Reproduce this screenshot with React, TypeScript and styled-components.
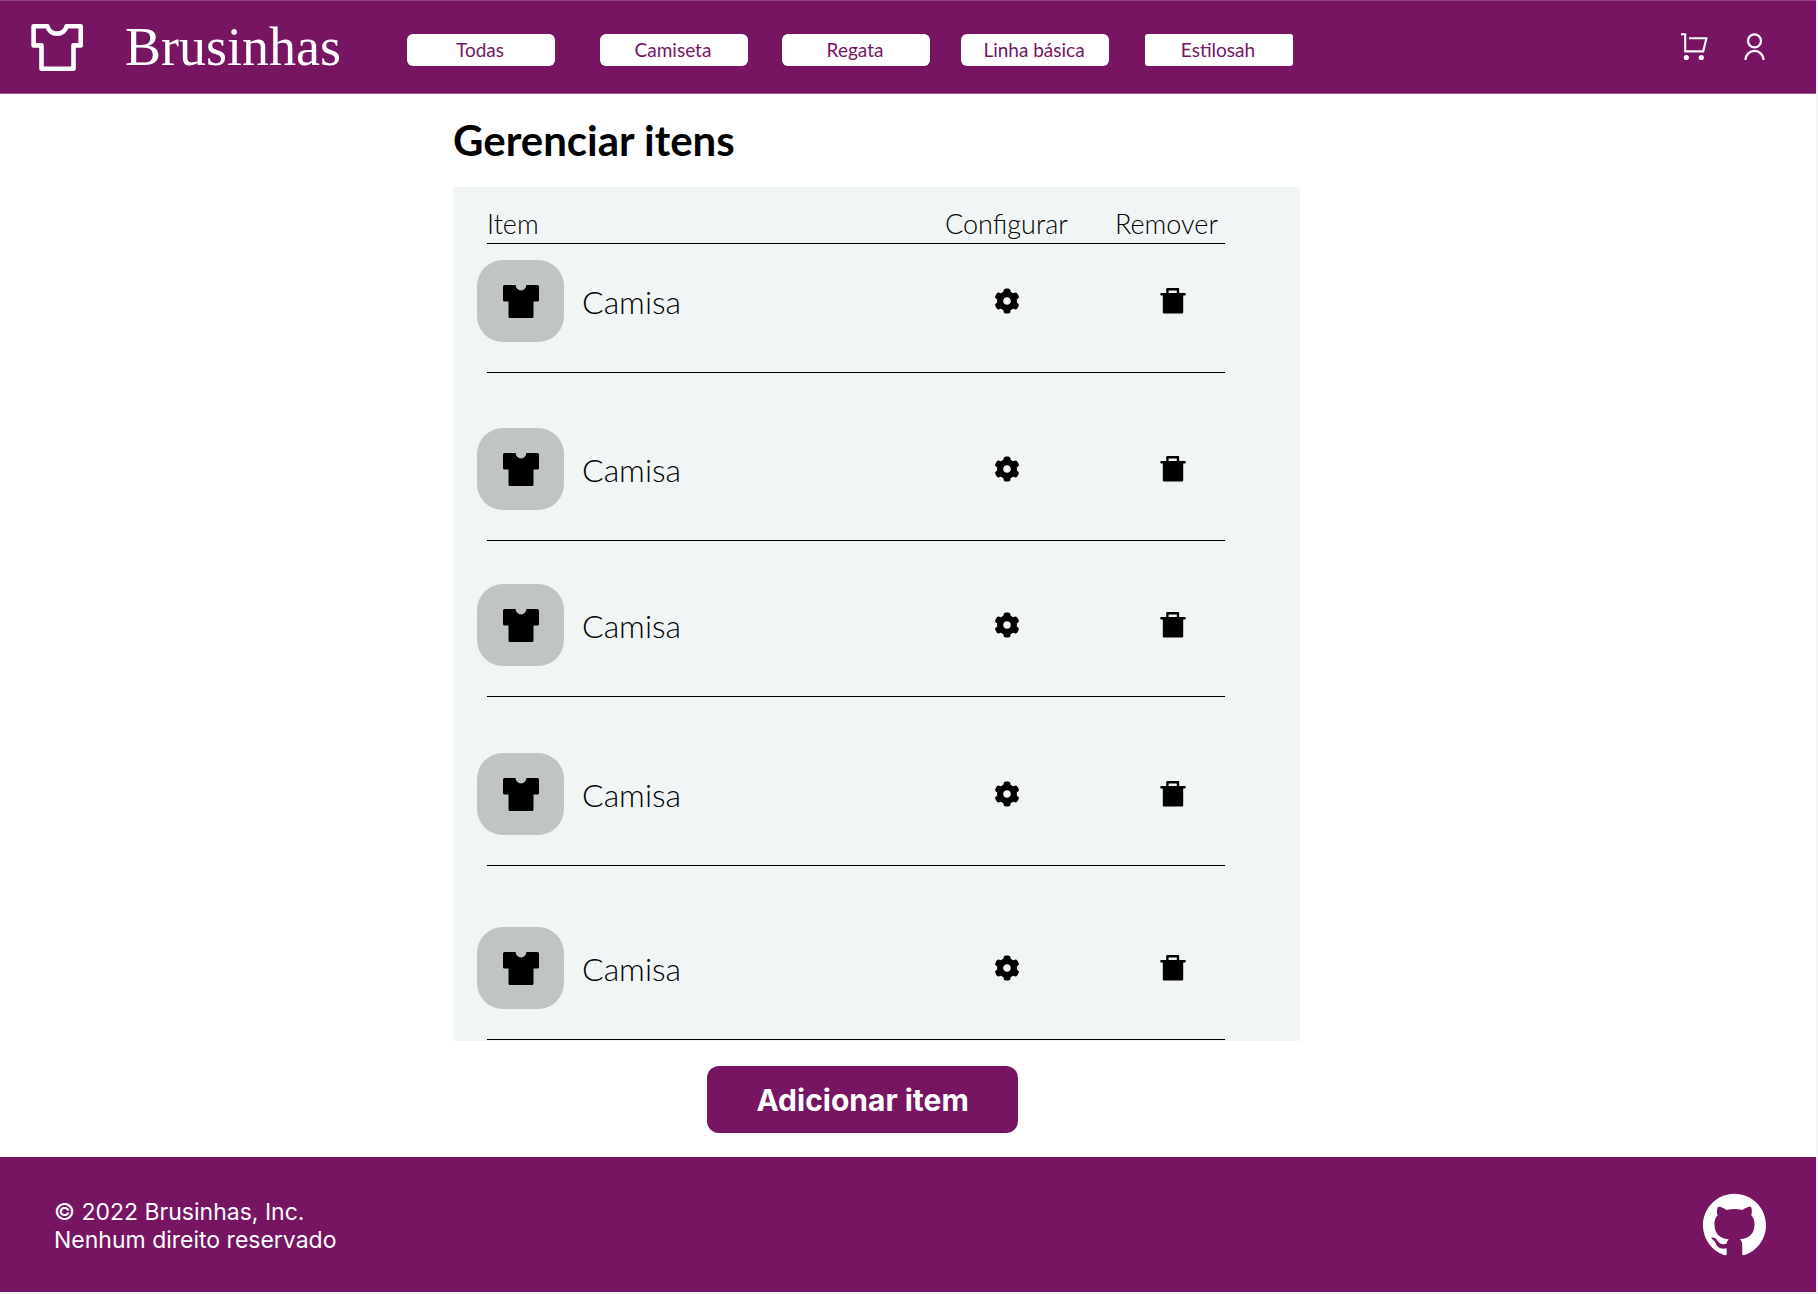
import React from "react";
import styled, { createGlobalStyle } from "styled-components";

const PURPLE = "#771562";

const GlobalStyle = createGlobalStyle`
  *, *::before, *::after { box-sizing: border-box; }
  body { margin: 0; background: #f5f5f5; }
  button { font: inherit; cursor: pointer; }
`;

const Page = styled.div`
  margin: 0 2px 2px 0;
  background: #fff;
  color: #000;
  font-family: Lato, "Open Sans", sans-serif;
`;

const Header = styled.header`
  display: grid;
  grid-template-columns: 94px 282px 1fr auto;
  align-items: center;
  height: 94px;
  padding: 0 51px 0 31px;
  background: ${PURPLE};
  border-top: 1px solid #8e4280;
  border-bottom: 1px solid #a25b95;
  color: #fff;
`;

const Brand = styled.a`
  color: inherit;
  text-decoration: none;
  font-family: "Liberation Serif", serif;
  font-size: 54px;
  line-height: 60px;
`;

const Nav = styled.nav`
  display: flex;
  padding-top: 5px;
`;

const NavButton = styled.button<{ $gap: number; $radius: number }>`
  flex: 0 1 148px;
  height: 32px;
  margin: 0 ${(p) => p.$gap}px 0 0;
  padding: 0 2px 0 0;
  border: 0;
  border-radius: ${(p) => p.$radius}px;
  background: #fff;
  color: ${PURPLE};
  font-size: 19px;
  line-height: 32px;
  white-space: nowrap;
`;

const Tools = styled.div`
  display: flex;
  gap: 36px;
`;

const IconButton = styled.button`
  display: flex;
  padding: 0;
  border: 0;
  background: none;
  color: inherit;
`;

const Main = styled.main`
  width: 847px;
  max-width: 75%;
  margin-left: calc(25% - 1px);
  padding: 22px 0 24px;
`;

const Title = styled.h1`
  margin: 0 0 23px;
  font-size: 42px;
  font-weight: 700;
  line-height: 48px;
`;

const Panel = styled.section`
  padding: 0 75px 1px 34px;
  background: #f1f5f6;
`;

const Table = styled.table`
  width: 100%;
  border-spacing: 0;
  table-layout: fixed;
  font-weight: 300;
`;

const HeadCell = styled.th<{ $width?: number }>`
  width: ${(p) => (p.$width ? `${p.$width}px` : "auto")};
  height: 57px;
  padding: 0 0 4px;
  border-bottom: 1px solid #000;
  font-size: 27px;
  font-weight: 300;
  line-height: 30px;
  text-align: left;
  vertical-align: bottom;
`;

const Cell = styled.td<{ $height: number }>`
  height: ${(p) => p.$height}px;
  padding: 0 0 30px;
  border-bottom: 1px solid #000;
  vertical-align: bottom;
`;

const Product = styled.div`
  display: flex;
  align-items: center;
  gap: 18px;
  margin-left: -10px;
  font-size: 32px;
`;

const Thumb = styled.span`
  display: flex;
  align-items: center;
  justify-content: center;
  width: 87px;
  height: 82px;
  border-radius: 26px;
  background: #c0c4c5;
`;

const Action = styled.div<{ $indent: number }>`
  display: flex;
  align-items: center;
  height: 82px;
  padding-left: ${(p) => p.$indent}px;
`;

const AddButton = styled.button`
  display: block;
  width: 311px;
  height: 67px;
  margin: 25px 0 0 30%;
  padding: 0;
  border: 0;
  border-radius: 12px;
  background: ${PURPLE};
  color: #fff;
  font-family: Inter, sans-serif;
  font-size: 30px;
  font-weight: 700;
`;

const Footer = styled.footer`
  display: flex;
  align-items: center;
  justify-content: space-between;
  height: 135px;
  padding: 0 50px 0 54px;
  background: ${PURPLE};
  color: #fff;
  font-family: Inter, sans-serif;
  font-size: 23px;
  line-height: 28px;
`;

const Legal = styled.p`
  margin: 0;
  padding-top: 2px;
`;

const FooterLink = styled.a`
  display: flex;
  color: inherit;
`;

const LogoIcon = () => (
  <svg width="52" height="47" viewBox="0 0 52 47" fill="none" stroke="currentColor" strokeWidth="4.6" strokeLinejoin="round" aria-hidden="true">
    <path d="M2.6 2.3H16.5A9.6 8.6 0 0 0 35.5 2.3H49.7V21.4H42.5V44.7H10.5V21.4H2.6Z" />
  </svg>
);

const CartIcon = () => (
  <svg width="27" height="28" viewBox="0 0 27 28" fill="none" stroke="currentColor" strokeWidth="2.1" aria-hidden="true">
    <path d="M0 1.3H4.2V18.4H22.2L25.4 5.2H8" />
    <circle cx="5.3" cy="24.5" r="2.6" fill="currentColor" stroke="none" />
    <circle cx="20.3" cy="24.5" r="2.6" fill="currentColor" stroke="none" />
  </svg>
);

const UserIcon = () => (
  <svg width="21" height="28" viewBox="0 0 21 28" fill="none" stroke="currentColor" strokeWidth="2.3" aria-hidden="true">
    <circle cx="10.5" cy="7.9" r="6.5" />
    <path d="M1.4 27A9.1 9.1 0 0 1 19.6 27" />
  </svg>
);

const ShirtIcon = () => (
  <svg width="36" height="33" viewBox="0 0 36 33" aria-hidden="true">
    <path d="M1.5 0H12.6A5.4 5.4 0 0 0 23.4 0H34.5Q36 0 36 1.5V15Q36 16.5 34.5 16.5H30.5V31.5Q30.5 33 29 33H7Q5.5 33 5.5 31.5V16.5H1.5Q0 16.5 0 15V1.5Q0 0 1.5 0Z" />
  </svg>
);

const GearIcon = () => (
  <svg width="26" height="26" viewBox="-13 -13 26 26" fill="none" stroke="currentColor" aria-hidden="true">
    <circle r="6.9" strokeWidth="6.2" />
    {[0, 60, 120, 180, 240, 300].map((angle) => (
      <path key={angle} d="M-1 -7V-10.1H1V-7Z" strokeWidth="5" strokeLinejoin="round" transform={`rotate(${angle})`} />
    ))}
  </svg>
);

const TrashIcon = () => (
  <svg width="26" height="26" viewBox="0 0 26 26" aria-hidden="true">
    <path d="M7.4 6V1.3H18V6" fill="none" stroke="currentColor" strokeWidth="2.4" strokeLinejoin="round" />
    <path d="M1 5H25Q25.7 5 25.7 6.2T25 7.4H23.2V24.5Q23.2 25.5 22.2 25.5H3.8Q2.8 25.5 2.8 24.5V7.4H1Q.3 7.4 .3 6.2T1 5Z" />
  </svg>
);

const GithubIcon = () => (
  <svg width="63" height="63" viewBox="0 0 24 24" fill="currentColor" aria-hidden="true">
    <path d="M12 .297c-6.63 0-12 5.373-12 12 0 5.303 3.438 9.8 8.205 11.385.6.113.82-.258.82-.577 0-.285-.01-1.04-.015-2.04-3.338.724-4.042-1.61-4.042-1.61C4.422 18.07 3.633 17.7 3.633 17.7c-1.087-.744.084-.729.084-.729 1.205.084 1.838 1.236 1.838 1.236 1.07 1.835 2.809 1.305 3.495.998.108-.776.417-1.305.76-1.605-2.665-.3-5.466-1.332-5.466-5.93 0-1.31.465-2.38 1.235-3.22-.135-.303-.54-1.523.105-3.176 0 0 1.005-.322 3.3 1.23.96-.267 1.98-.399 3-.405 1.02.006 2.04.138 3 .405 2.28-1.552 3.285-1.23 3.285-1.23.645 1.653.24 2.873.12 3.176.765.84 1.23 1.91 1.23 3.22 0 4.61-2.805 5.625-5.475 5.92.42.36.81 1.096.81 2.22 0 1.606-.015 2.896-.015 3.286 0 .315.21.69.825.57C20.565 22.092 24 17.592 24 12.297c0-6.627-5.373-12-12-12" />
  </svg>
);

const categories = [
  { label: "Todas", gap: 45, radius: 6 },
  { label: "Camiseta", gap: 34, radius: 6 },
  { label: "Regata", gap: 31, radius: 6 },
  { label: "Linha básica", gap: 36, radius: 6 },
  { label: "Estilosah", gap: 0, radius: 3 },
];

const items = [
  { id: 1, name: "Camisa", height: 129 },
  { id: 2, name: "Camisa", height: 168 },
  { id: 3, name: "Camisa", height: 156 },
  { id: 4, name: "Camisa", height: 169 },
  { id: 5, name: "Camisa", height: 174 },
];

export default function App() {
  return (
    <Page>
      <GlobalStyle />
      <Header>
        <LogoIcon />
        <Brand href="#">Brusinhas</Brand>
        <Nav>
          {categories.map((c) => (
            <NavButton key={c.label} type="button" $gap={c.gap} $radius={c.radius}>
              {c.label}
            </NavButton>
          ))}
        </Nav>
        <Tools>
          <IconButton type="button" aria-label="Carrinho">
            <CartIcon />
          </IconButton>
          <IconButton type="button" aria-label="Conta">
            <UserIcon />
          </IconButton>
        </Tools>
      </Header>
      <Main>
        <Title>Gerenciar itens</Title>
        <Panel>
          <Table>
            <thead>
              <tr>
                <HeadCell scope="col">Item</HeadCell>
                <HeadCell scope="col" $width={170}>Configurar</HeadCell>
                <HeadCell scope="col" $width={110}>Remover</HeadCell>
              </tr>
            </thead>
            <tbody>
              {items.map((item) => (
                <tr key={item.id}>
                  <Cell $height={item.height}>
                    <Product>
                      <Thumb>
                        <ShirtIcon />
                      </Thumb>
                      {item.name}
                    </Product>
                  </Cell>
                  <Cell $height={item.height}>
                    <Action $indent={49}>
                      <IconButton type="button" aria-label="Configurar">
                        <GearIcon />
                      </IconButton>
                    </Action>
                  </Cell>
                  <Cell $height={item.height}>
                    <Action $indent={45}>
                      <IconButton type="button" aria-label="Remover">
                        <TrashIcon />
                      </IconButton>
                    </Action>
                  </Cell>
                </tr>
              ))}
            </tbody>
          </Table>
        </Panel>
        <AddButton type="button">Adicionar item</AddButton>
      </Main>
      <Footer>
        <Legal>
          © 2022 Brusinhas, Inc.
          <br />
          Nenhum direito reservado
        </Legal>
        <FooterLink href="#" aria-label="GitHub">
          <GithubIcon />
        </FooterLink>
      </Footer>
    </Page>
  );
}
